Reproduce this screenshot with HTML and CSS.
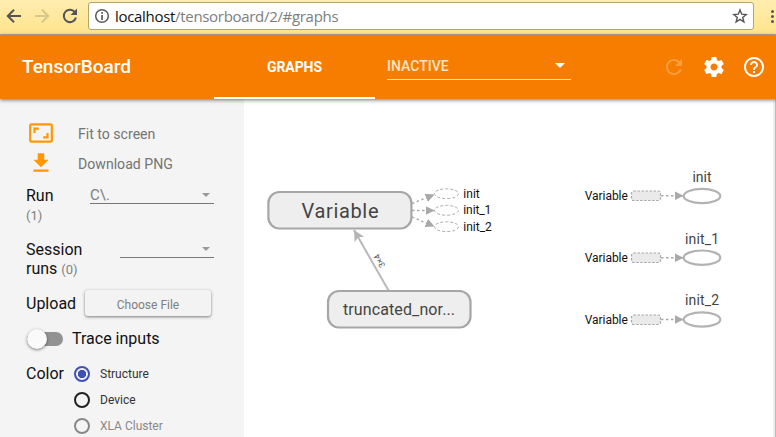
FILE: index.html
```html
<!DOCTYPE html>
<html lang="en">
<head>
<meta charset="utf-8">
<title>TensorBoard</title>
<link rel="stylesheet" href="styles.css">
</head>
<body>
<div class="browser">
  <svg class="nav" width="88" height="34" viewBox="0 0 88 34" fill="none" stroke="#555" stroke-width="2">
    <path d="M21 16H8M14 9.800l-6.200 6.200 6.200 6.200"/>
    <path d="M35 16h13M42 9.800l6.200 6.200-6.200 6.200" stroke="#d6c78d"/>
    <path d="M75.200 12.500A6.200 6.200 0 1 0 76 17.500"/>
    <path d="M77 8.500v6.500h-6.500z" fill="#555" stroke="none"/>
  </svg>
  <div class="address">
    <svg width="16" height="16" viewBox="0 0 16 16"><circle cx="8" cy="8" r="6.300" fill="none" stroke="#5a5a5a" stroke-width="1.500"/><path d="M7.200 4h1.700v1.800H7.200zM7.200 7h1.700v5H7.200z" fill="#5a5a5a"/></svg>
    <span class="url"><b>localhost</b>/tensorboard/2/#graphs</span>
    <svg class="star" width="16" height="16" viewBox="0 0 16 16"><path d="M8 1.900l1.700 4.300 4.500.3-3.500 2.900 1.200 4.600L8 11.400l-3.900 2.600 1.200-4.600-3.500-2.900 4.500-.3z" fill="none" stroke="#555" stroke-width="1.400"/></svg>
  </div>
  <div class="dots"><i></i><i></i><i></i></div>
</div>
<header class="toolbar">
  <h1>TensorBoard</h1>
  <div class="tab">GRAPHS</div>
  <div class="inactive"><span>INACTIVE</span><i class="caret"></i></div>
  <div class="actions">
    <svg class="dim" viewBox="0 0 24 24"><path d="M17.650 6.350C16.200 4.900 14.210 4 12 4c-4.420 0-7.990 3.580-7.990 8s3.570 8 7.990 8c3.730 0 6.840-2.550 7.730-6h-2.080c-.82 2.330-3.040 4-5.650 4-3.310 0-6-2.690-6-6s2.690-6 6-6c1.660 0 3.140.69 4.220 1.780L13 11h7V4l-2.350 2.350z"/></svg>
    <svg viewBox="0 0 24 24"><path d="M19.430 12.980c.04-.32.07-.64.07-.98s-.03-.66-.07-.98l2.110-1.650c.19-.15.24-.42.12-.64l-2-3.460c-.12-.22-.39-.3-.61-.22l-2.490 1c-.52-.4-1.080-.73-1.690-.98l-.38-2.650C14.460 2.180 14.250 2 14 2h-4c-.25 0-.46.18-.49.42l-.38 2.650c-.61.25-1.170.59-1.690.98l-2.490-1c-.23-.09-.49 0-.61.22l-2 3.460c-.13.22-.07.49.12.64l2.110 1.650c-.04.32-.07.65-.07.98s.03.66.07.98l-2.110 1.650c-.19.15-.24.42-.12.64l2 3.460c.12.22.39.3.61.22l2.490-1c.52.4 1.080.73 1.690.98l.38 2.650c.03.24.24.42.49.42h4c.25 0 .46-.18.49-.42l.38-2.650c.61-.25 1.170-.59 1.690-.98l2.490 1c.23.09.49 0 .61-.22l2-3.460c.12-.22.07-.49-.12-.64l-2.110-1.650zM12 15.500c-1.930 0-3.500-1.570-3.500-3.500s1.570-3.500 3.500-3.500 3.500 1.570 3.500 3.500-1.570 3.500-3.500 3.500z"/></svg>
    <svg viewBox="0 0 24 24"><path d="M11 18h2v-2h-2v2zm1-16C6.480 2 2 6.480 2 12s4.480 10 10 10 10-4.480 10-10S17.520 2 12 2zm0 18c-4.410 0-8-3.590-8-8s3.590-8 8-8 8 3.590 8 8-3.590 8-8 8zm0-14c-2.210 0-4 1.790-4 4h2c0-1.100.9-2 2-2s2 .9 2 2c0 2-3 1.750-3 5h2c0-2.250 3-2.500 3-5 0-2.210-1.790-4-4-4z"/></svg>
  </div>
</header>
<main>
  <aside>
    <div class="command"><svg width="26" height="26" viewBox="0 0 24 24"><path d="M19 12h-2v3h-3v2h5v-5zM7 9h3V7H5v5h2V9zm14-6H3c-1.100 0-2 .9-2 2v14c0 1.100.9 2 2 2h18c1.100 0 2-.9 2-2V5c0-1.100-.9-2-2-2zm0 16.010H3V4.990h18v14.020z"/></svg><span>Fit to screen</span></div>
    <div class="command"><svg width="26" height="26" viewBox="0 0 24 24"><path d="M19 9h-4V3H9v6H5l7 7 7-7zM5 18v2h14v-2H5z"/></svg><span>Download PNG</span></div>
    <div class="row run"><div class="title">Run<br><small>(1)</small></div><div class="select"><span>C\.</span><i class="caret"></i></div></div>
    <div class="row session"><div class="title">Session<br>runs <small>(0)</small></div><div class="select short"><i class="caret"></i></div></div>
    <div class="row upload"><div class="title">Upload</div><button>Choose File</button></div>
    <div class="row trace"><div class="switch"></div><div class="title">Trace inputs</div></div>
    <div class="row color"><div class="title">Color</div>
      <div class="radios">
        <div class="radio on"><i></i>Structure</div>
        <div class="radio"><i></i>Device</div>
        <div class="radio off"><i></i>XLA Cluster</div>
      </div>
    </div>
  </aside>
  <svg class="graph" width="529" height="338" viewBox="244 99 529 338">
    <defs>
      <marker id="small" viewBox="0 0 8 8" refX="8" refY="4" markerWidth="9" markerHeight="9" markerUnits="userSpaceOnUse" orient="auto"><path d="M0 0l8 4-8 4z" fill="#a9a9a9"/></marker>
      <marker id="large" viewBox="0 0 11 11" refX="11" refY="5.500" markerWidth="11" markerHeight="11" markerUnits="userSpaceOnUse" orient="auto"><path d="M0 0l11 5.500L0 11l2.700-5.500z" fill="#b4b4b4"/></marker>
    </defs>
    <path class="edge" d="M388.500 290.500L354 230" marker-end="url(#large)"/>
    <text class="dimension" transform="translate(385.500 265.500) rotate(240)" textLength="14">3×4</text>
    <rect class="node" x="268.400" y="192" width="143" height="36.500" rx="11"/>
    <rect class="node" x="328" y="291" width="142.500" height="36.500" rx="11"/>
    <text class="variable" x="340" y="218" textLength="77">Variable</text>
    <text class="truncated" x="399" y="315" textLength="112">truncated_nor...</text>
    <g class="dashed">
      <path d="M412 203.500L434.500 194.500" marker-end="url(#small)"/>
      <path d="M412 210.500H434.500" marker-end="url(#small)"/>
      <path d="M412 217L434.500 226.500" marker-end="url(#small)"/>
    </g>
    <g class="reference">
      <ellipse cx="446.500" cy="193.700" rx="12" ry="4.900"/><ellipse cx="446.500" cy="210.300" rx="12" ry="4.900"/><ellipse cx="446.500" cy="226.700" rx="12" ry="4.900"/>
    </g>
    <g class="annotation">
      <text x="463.300" y="198" textLength="16.500">init</text>
      <text x="463.300" y="214" textLength="28">init_1</text>
      <text x="463.300" y="231" textLength="28.500">init_2</text>
      <text x="584.800" y="200" textLength="43">Variable</text>
      <text x="584.800" y="262" textLength="43">Variable</text>
      <text x="584.800" y="324" textLength="43">Variable</text>
    </g>
    <g class="reference box">
      <rect x="631.500" y="191" width="29" height="9.500" rx="2"/><rect x="631.500" y="253" width="29" height="9.500" rx="2"/><rect x="631.500" y="315" width="29" height="9.500" rx="2"/>
    </g>
    <g class="dashed">
      <path d="M661 195.800H683.500" marker-end="url(#small)"/><path d="M661 257.800H683.500" marker-end="url(#small)"/><path d="M661 319.500H683.500" marker-end="url(#small)"/>
    </g>
    <g class="operation">
      <ellipse cx="702" cy="196" rx="18.300" ry="7.200"/><ellipse cx="702" cy="257.700" rx="18.300" ry="7.200"/><ellipse cx="702" cy="319.500" rx="18.300" ry="7.200"/>
    </g>
    <g class="op-label">
      <text x="702" y="182" textLength="19">init</text><text x="702" y="244" textLength="34">init_1</text><text x="702" y="305" textLength="34">init_2</text>
    </g>
  </svg>
</main>
</body>
</html>
```
FILE: styles.css
```css
* { box-sizing: border-box; }
body { margin: 0; height: 437px; overflow: hidden; background: #fff; font-family: Roboto, sans-serif; color: #111; }
svg { display: block; flex: none; }

.browser { display: flex; align-items: flex-start; height: 35px; background: linear-gradient(#ffedb0, #ffe48c); border-bottom: 1px solid #b5ad9c; }
.address { display: flex; align-items: center; width: 666px; height: 28px; margin-top: 2px; padding: 0 5px; background: #fff; border: 1px solid #b3a46b; border-radius: 3px; }
.url { flex: 1; margin-left: 5px; font: 15px/20px "Open Sans", sans-serif; letter-spacing: -.31px; color: #7d7d7d; }
.url b { font-weight: 400; color: #111; }
.dots { display: flex; flex-direction: column; gap: 2px; margin: 10px 0 0 17px; }
.dots i { width: 3px; height: 3px; border-radius: 50%; background: #555; }

.toolbar { position: relative; z-index: 1; display: flex; height: 64px; background: #f77d00; color: #fff; box-shadow: 0 1px 4px rgba(0, 0, 0, .55); }
h1 { width: 214px; margin: 0; padding-left: 22px; font-size: 19px; font-weight: 500; line-height: 64px; letter-spacing: 0; }
.tab { width: 161px; height: 64px; border-bottom: 2px solid #fff; font-size: 14px; font-weight: 700; line-height: 64px; text-align: center; letter-spacing: -.1px; }
.inactive { display: flex; align-items: center; justify-content: space-between; width: 184px; height: 28px; margin: 17px 0 0 12px; padding-right: 6px; border-bottom: 1px solid #ffe1b8; color: #ffe3c5; font-size: 14px; font-weight: 500; }
.caret { width: 0; height: 0; border: 5px solid transparent; border-top-color: #fff; border-bottom: 0; }
.actions { display: flex; align-items: center; gap: 16px; margin-left: 91px; }
.actions svg { width: 24px; height: 24px; fill: #fff; }
.actions .dim { opacity: .25; }

main { display: flex; height: 338px; border-right: 1px solid #bbb; box-shadow: inset -2px 0 #eee; }
aside { flex: none; width: 244px; padding: 20px 30px 0 26px; background: #f4f4f4; }
.command { display: flex; align-items: center; height: 30px; padding-left: 2px; color: #757575; font-size: 14.100px; }
.command svg { position: relative; top: -1px; fill: #ff9800; }
.command span { margin-left: 24px; }
.row { display: flex; }
.title { font-size: 16px; line-height: 20px; white-space: nowrap; }
small { color: #808080; font-size: 13px; }
.run { justify-content: space-between; height: 54px; padding-top: 7px; }
.run .title { line-height: 19px; }
.session { justify-content: space-between; height: 50px; padding-top: 7px; }
.session .title { line-height: 19px; }
.select { display: flex; align-items: center; justify-content: space-between; width: 124px; height: 18px; padding: 1px 4px 0 0; border-bottom: 1px solid #777; color: #808080; font-size: 15px; }
.select .caret { border-width: 4px; border-bottom: 0; border-top-color: #999; }
.select.short { width: 94px; height: 18px; justify-content: flex-end; }
.run, .session { align-items: flex-start; }
.upload { height: 42px; padding-top: 7px; align-items: flex-start; }
.upload .title { width: 59px; line-height: 28px; }
button { width: 126px; height: 26px; padding: 3px 0 0; border: 0; border-radius: 3px; background: #f3f3f3; box-shadow: 0 1px 3px rgba(0, 0, 0, .5); color: #808080; font: 12px Roboto, sans-serif; }
.trace { height: 28px; align-items: center; }
.switch { position: relative; width: 36px; height: 14px; margin: 0 9px 0 1px; border-radius: 7px; background: #929292; }
.switch::before { content: ""; position: absolute; top: -3px; left: 0; width: 20px; height: 20px; border-radius: 50%; background: #fafafa; box-shadow: 0 1px 3px rgba(0, 0, 0, .5); }
.color { padding-top: 8px; }
.color .title { width: 48px; line-height: 26px; }
.radio { display: flex; align-items: center; height: 26px; font-size: 12px; white-space: nowrap; color: #333; }
.radio i { width: 16px; height: 16px; margin-right: 10px; border: 2px solid #222; border-radius: 50%; }
.radio.on i { border-color: #3f51b5; background: radial-gradient(circle, #3f51b5 3.800px, transparent 4.500px); }
.radio.off { color: #888; }
.radio.off i { border-color: #888; }

.graph text { font-family: Roboto, sans-serif; fill: #444; }
.edge { stroke: #b9b9b9; stroke-width: 2; }
.node { fill: #eee; stroke: #a6a6a6; stroke-width: 2.200; }
.graph .variable { font-size: 20px; text-anchor: middle; }
.graph .truncated { font-size: 16px; text-anchor: middle; }
.graph .dimension { font-size: 8.500px; fill: #555; }
.dashed path { fill: none; stroke: #aaa; stroke-width: 1.400; stroke-dasharray: 2.500 2.500; }
.reference { fill: #fff; stroke: #aaa; stroke-width: 1; stroke-dasharray: 3 2; }
.reference.box { fill: #eaeaea; stroke-width: 1.200; stroke-dasharray: 2.500 1.500; }
.graph .annotation text { font-size: 12px; fill: #111; }
.operation { fill: #fff; stroke: #b3b3b3; stroke-width: 2.200; }
.graph .op-label text { font-size: 14px; text-anchor: middle; }
```
